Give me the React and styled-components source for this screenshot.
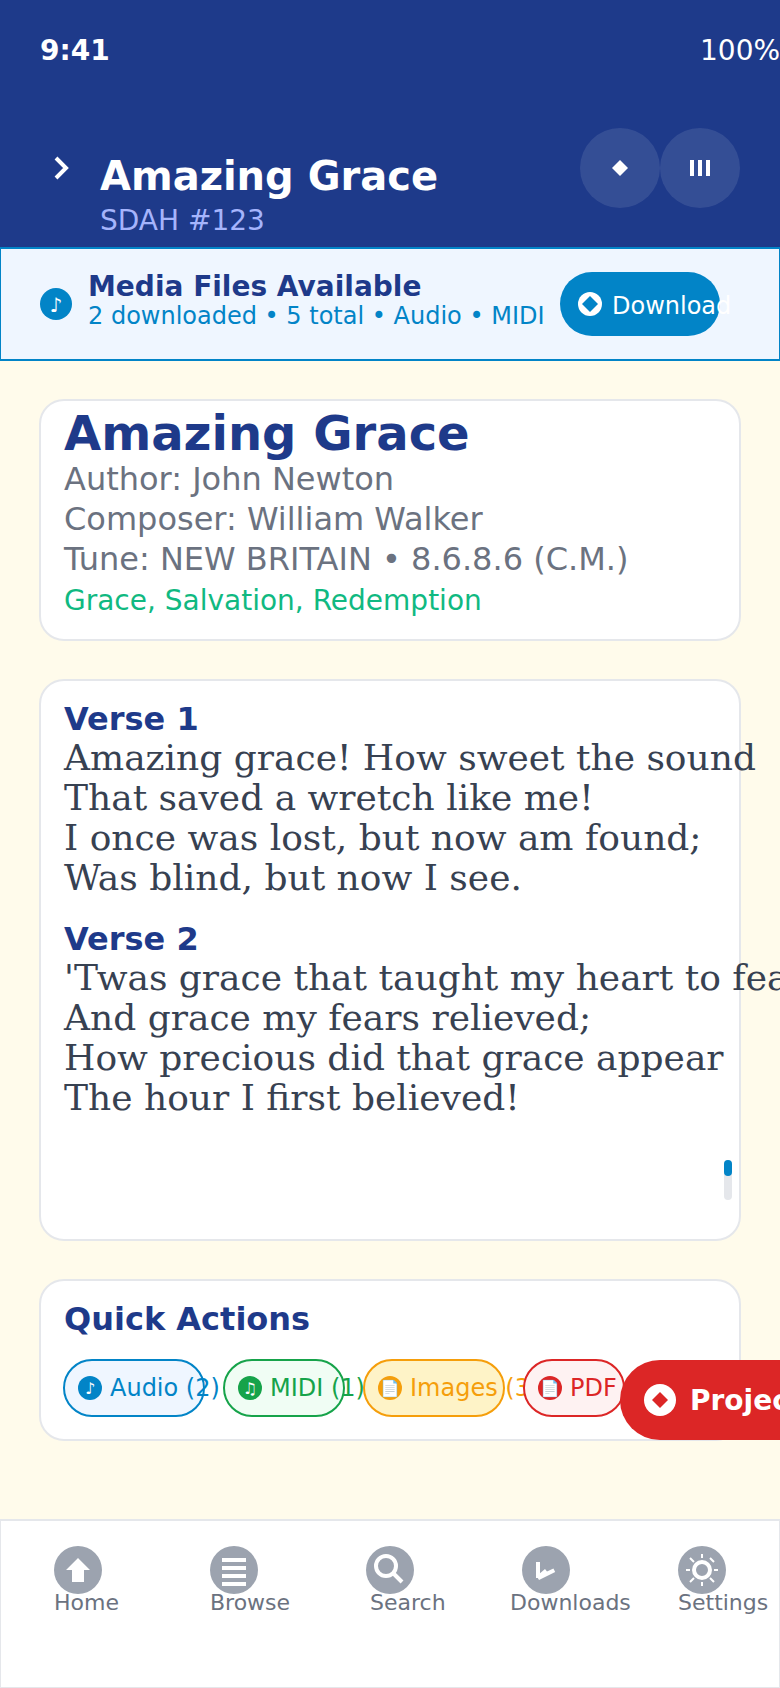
import React from "react";
import styled, { createGlobalStyle } from "styled-components";

const navy = "#1e3a8a";
const sky = "#0284c7";
const line = "#e5e7eb";

const GlobalStyle = createGlobalStyle`
  *, *::before, *::after { box-sizing: border-box; }
  body {
    margin: 0;
    overflow: hidden;
    font-family: "DejaVu Sans", sans-serif;
  }
`;

const Screen = styled.div`
  position: relative;
  display: flex;
  flex-direction: column;
  width: 780px;
  height: 1688px;
  overflow: hidden;
  background: #fffbeb;
  white-space: nowrap;
`;

const Text = styled.div`
  font-size: ${(p) => p.$size}px;
  line-height: ${(p) => p.$line}px;
  font-weight: ${(p) => (p.$bold ? 700 : 400)};
  color: ${(p) => p.$color};
`;

const Header = styled.header`
  height: 247px;
  flex: none;
  background: ${navy};
`;

const StatusBar = styled.div`
  display: flex;
  justify-content: space-between;
  height: 128px;
  padding: 34px 0 0 40px;
`;

const Battery = styled.div`
  width: 80px;
`;

const TitleBar = styled.div`
  display: flex;
  padding: 0 40px;
`;

const BackButton = styled.div`
  width: 60px;
  height: 80px;
  display: flex;
`;

const TitleGroup = styled.div`
  flex: 1;
  padding-top: 25px;
`;

const Subtitle = styled.div`
  margin-top: 5px;
`;

const RoundButton = styled.div`
  width: 80px;
  height: 80px;
  border-radius: 50%;
  background: rgba(255, 255, 255, 0.1);
  display: flex;
  align-items: center;
  justify-content: center;
`;

const Banner = styled.section`
  flex: none;
  display: flex;
  height: 114px;
  margin: 0 -1px;
  padding: 0 0 0 39px;
  border: 2px solid ${sky};
  background: #eff6ff;
`;

const BannerText = styled.div`
  width: 472px;
  padding: 21px 0 0 16px;
`;

const Dot = styled.div`
  flex: none;
  width: ${(p) => p.$size}px;
  height: ${(p) => p.$size}px;
  margin-top: ${(p) => p.$top || 0}px;
  border-radius: 50%;
  background: ${(p) => p.$bg};
  display: flex;
  align-items: center;
  justify-content: center;
`;

const GlyphDot = styled(Dot)`
  padding-top: 2px;
  color: #fff;
  font-size: ${(p) => p.$font}px;
  line-height: ${(p) => p.$size}px;
`;

const DownloadButton = styled.div`
  width: 160px;
  height: 64px;
  margin: 23px 0 0 16px;
  padding-left: 18px;
  border-radius: 32px;
  background: ${sky};
  display: flex;
  align-items: center;
  gap: 10px;
`;

const DownloadLabel = styled(Text)`
  padding-top: 4px;
`;

const Main = styled.main`
  height: 1158px;
  flex: none;
  display: flex;
  flex-direction: column;
  gap: 38px;
  padding: 38px 39px 0;
`;

const Card = styled.section`
  position: relative;
  flex: none;
  height: ${(p) => p.$height}px;
  padding: ${(p) => p.$top}px 0 0 23px;
  border: 2px solid ${line};
  border-radius: 25px;
  background: #fff;
`;

const Verse = styled.div`
  margin-bottom: 22px;
`;

const Lyric = styled.div`
  font-family: "DejaVu Serif", serif;
  font-size: 36px;
  line-height: 40px;
  color: #374151;
`;

const ScrollTrack = styled.div`
  position: absolute;
  top: 479px;
  right: 7px;
  width: 8px;
  height: 40px;
  border-radius: 4px;
  background: ${line};
`;

const ScrollThumb = styled.div`
  height: 16px;
  border-radius: 4px;
  background: ${sky};
`;

const Chips = styled.div`
  display: flex;
  gap: 18px;
  margin: 21px 0 0 -1px;
`;

const Chip = styled.div`
  position: relative;
  flex: none;
  width: ${(p) => p.$width}px;
  height: 58px;
  padding-left: 13px;
  border: 2px solid ${(p) => p.$color};
  border-radius: 29px;
  background: ${(p) => p.$bg};
  color: ${(p) => p.$color};
  display: flex;
  align-items: center;
  gap: 8px;
`;

const ProjectButton = styled.div`
  position: absolute;
  left: 620px;
  top: 1360px;
  width: 240px;
  height: 80px;
  padding-left: 24px;
  border-radius: 40px;
  background: #dc2626;
  display: flex;
  align-items: center;
  gap: 14px;
`;

const ProjectLabel = styled(Text)`
  padding-top: 1px;
`;

const NavBar = styled.nav`
  flex: none;
  display: flex;
  height: 170px;
  margin: 0 -1px;
  padding: 25px 0 0 53px;
  border: 2px solid ${line};
  background: #fff;
`;

const NavItem = styled.div`
  flex: none;
  width: 156px;
`;

const NavIcon = styled.svg`
  display: block;
`;

const NavLabel = styled.div`
  margin: -4px 0 0 ${(p) => p.$shift}px;
  font-size: 22px;
  line-height: 25px;
  color: #6b7280;
`;

const Diamond = ({ color }) => (
  <svg width="16" height="16" viewBox="0 0 16 16">
    <path d="M8 0L16 8L8 16L0 8Z" fill={color} />
  </svg>
);

const verses = [
  {
    title: "Verse 1",
    lines: [
      "Amazing grace! How sweet the sound",
      "That saved a wretch like me!",
      "I once was lost, but now am found;",
      "Was blind, but now I see.",
    ],
  },
  {
    title: "Verse 2",
    lines: [
      "'Twas grace that taught my heart to fear,",
      "And grace my fears relieved;",
      "How precious did that grace appear",
      "The hour I first believed!",
    ],
  },
];

const chips = [
  { icon: "♪", label: "Audio (2)", width: 142, color: sky, bg: "#eff6ff" },
  { icon: "♫", label: "MIDI (1)", width: 122, color: "#16a34a", bg: "#f0fdf4" },
  { icon: "📄", label: "Images (3)", width: 142, color: "#f59e0b", bg: "#fef3c7" },
  { icon: "📄", label: "PDF", width: 102, color: "#dc2626", bg: "#fef2f2" },
];

const navItems = [
  {
    label: "Home",
    shift: 0,
    icon: <path d="M24 12L36 24H30V36H18V24H12Z" fill="#fff" />,
  },
  {
    label: "Browse",
    shift: 0,
    icon: <path d="M12 12h24v4H12zM12 20h24v4H12zM12 28h24v4H12zM12 36h24v4H12z" fill="#fff" />,
  },
  {
    label: "Search",
    shift: 4,
    icon: (
      <g fill="none" stroke="#fff" strokeWidth="4">
        <circle cx="20" cy="20" r="10" />
        <path d="M27 27L36 36" />
      </g>
    ),
  },
  {
    label: "Downloads",
    shift: -12,
    icon: (
      <path
        d="M14 16H18V27.3L23 23L25 25.5L31.4 22.5L33.2 26L17 34L15.8 32H14Z"
        fill="#fff"
      />
    ),
  },
  {
    label: "Settings",
    shift: 0,
    icon: (
      <g fill="none" stroke="#fff">
        <circle cx="24" cy="24" r="8" strokeWidth="4" />
        <path
          strokeWidth="2"
          d="M24 8v4M24 36v4M8 24h4M36 24h4M12 12l4 4M32 12l4 4M12 36l4 -4M32 32l4 4"
        />
      </g>
    ),
  },
];

export default function App() {
  return (
    <Screen>
      <GlobalStyle />
      <Header>
        <StatusBar>
          <Text $size={28} $line={33} $color="#fff" $bold>9:41</Text>
          <Battery>
            <Text $size={28} $line={33} $color="#fff">100%</Text>
          </Battery>
        </StatusBar>
        <TitleBar>
          <BackButton>
            <svg width="40" height="80" viewBox="0 0 40 80">
              <path d="M16 30L26 40L16 50" fill="none" stroke="#fff" strokeWidth="4" />
            </svg>
          </BackButton>
          <TitleGroup>
            <Text $size={40} $line={46} $color="#fff" $bold>Amazing Grace</Text>
            <Subtitle>
              <Text $size={28} $line={33} $color="#a5b4fc">SDAH #123</Text>
            </Subtitle>
          </TitleGroup>
          <RoundButton>
            <Diamond color="#fff" />
          </RoundButton>
          <RoundButton>
            <svg width="20" height="16" viewBox="0 0 20 16">
              <path d="M0 0h4v16H0zM8 0h4v16H8zM16 0h4v16h-4z" fill="#fff" />
            </svg>
          </RoundButton>
        </TitleBar>
      </Header>

      <Banner>
        <GlyphDot $size={32} $top={39} $bg={sky} $font={20}>♪</GlyphDot>
        <BannerText>
          <Text $size={28} $line={33} $color={navy} $bold>Media Files Available</Text>
          <Text $size={24} $line={26} $color={sky}>2 downloaded • 5 total • Audio • MIDI</Text>
        </BannerText>
        <DownloadButton>
          <Dot $size={24} $bg="#fff">
            <Diamond color={sky} />
          </Dot>
          <DownloadLabel $size={24} $line={28} $color="#fff">Download</DownloadLabel>
        </DownloadButton>
      </Banner>

      <Main>
        <Card $height={242} $top={6}>
          <Text $size={48} $line={52} $color={navy} $bold>Amazing Grace</Text>
          <Text $size={32} $line={40} $color="#6b7280">Author: John Newton</Text>
          <Text $size={32} $line={40} $color="#6b7280">Composer: William Walker</Text>
          <Text $size={32} $line={40} $color="#6b7280">Tune: NEW BRITAIN • 8.6.8.6 (C.M.)</Text>
          <Text $size={28} $line={43} $color="#10b981">Grace, Salvation, Redemption</Text>
        </Card>

        <Card $height={562} $top={19}>
          {verses.map((verse) => (
            <Verse key={verse.title}>
              <Text $size={32} $line={38} $color={navy} $bold>{verse.title}</Text>
              {verse.lines.map((text) => (
                <Lyric key={text}>{text}</Lyric>
              ))}
            </Verse>
          ))}
          <ScrollTrack>
            <ScrollThumb />
          </ScrollTrack>
        </Card>

        <Card $height={162} $top={19}>
          <Text $size={32} $line={38} $color={navy} $bold>Quick Actions</Text>
          <Chips>
            {chips.map((chip) => (
              <Chip key={chip.label} $width={chip.width} $color={chip.color} $bg={chip.bg}>
                <GlyphDot $size={24} $bg={chip.color} $font={16}>{chip.icon}</GlyphDot>
                <Text $size={24} $line={28} $color={chip.color}>{chip.label}</Text>
              </Chip>
            ))}
          </Chips>
        </Card>
      </Main>

      <NavBar>
        {navItems.map((item) => (
          <NavItem key={item.label}>
            <NavIcon width="48" height="48" viewBox="0 0 48 48">
              <circle cx="24" cy="24" r="24" fill="#9ca3af" />
              {item.icon}
            </NavIcon>
            <NavLabel $shift={item.shift}>{item.label}</NavLabel>
          </NavItem>
        ))}
      </NavBar>

      <ProjectButton>
        <Dot $size={32} $bg="#fff">
          <Diamond color="#dc2626" />
        </Dot>
        <ProjectLabel $size={28} $line={33} $color="#fff" $bold>Project</ProjectLabel>
      </ProjectButton>
    </Screen>
  );
}
